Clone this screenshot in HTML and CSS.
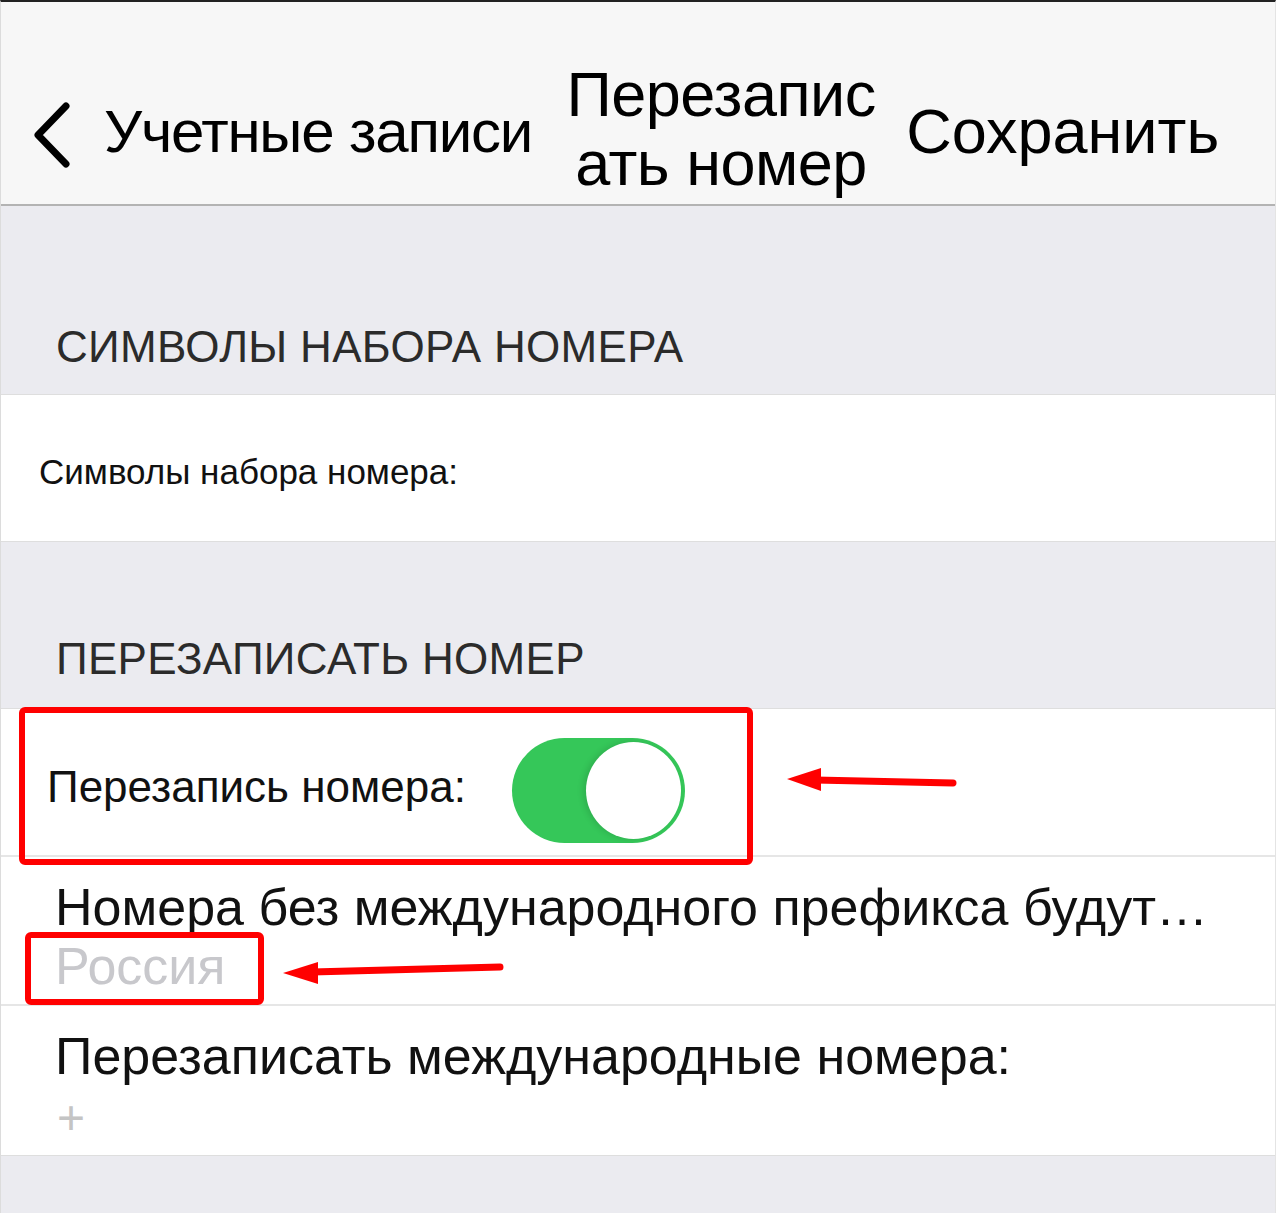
FILE: index.html
```html
<!DOCTYPE html>
<html lang="ru">
<head>
<meta charset="utf-8">
<title>Перезаписать номер</title>
<link rel="stylesheet" href="styles.css">
</head>
<body>
<div class="page">
  <header class="navbar">
    <div class="nav-back">
      <svg class="chevron" width="40" height="66" viewBox="0 0 40 66"><path d="M35 4 L7 33 L35 62" fill="none" stroke="#000" stroke-width="7" stroke-linecap="round" stroke-linejoin="round"/></svg>
      <span class="nav-back-text">Учетные записи</span>
    </div>
    <div class="nav-title">Перезапис<br>ать номер</div>
    <div class="nav-save">Сохранить</div>
  </header>

  <div class="section-header first">СИМВОЛЫ НАБОРА НОМЕРА</div>
  <div class="group">
    <div class="row row-small">Символы набора номера:</div>
  </div>

  <div class="section-header">ПЕРЕЗАПИСАТЬ НОМЕР</div>
  <div class="group">
    <div class="row row-toggle">
      <span class="toggle-label">Перезапись номера:</span>
      <span class="switch"><span class="knob"></span></span>
    </div>
    <div class="row row-two">
      <div class="row-title">Номера без международного префикса будут…</div>
      <div class="row-sub">Россия</div>
    </div>
    <div class="row row-two last">
      <div class="row-title">Перезаписать международные номера:</div>
      <div class="row-plus">+</div>
    </div>
  </div>
  <div class="bottom-fill"></div>

  <svg class="annotations" width="1276" height="1213" viewBox="0 0 1276 1213">
    <rect x="22" y="710" width="728" height="152" rx="3" fill="none" stroke="#ff0000" stroke-width="6"/>
    <rect x="28" y="935" width="233" height="67" rx="3" fill="none" stroke="#ff0000" stroke-width="6"/>
    <line x1="815" y1="780" x2="953" y2="783" stroke="#ff0000" stroke-width="7" stroke-linecap="round"/>
    <polygon points="787,779 821,768 821,791" fill="#ff0000"/>
    <line x1="312" y1="972" x2="500" y2="967" stroke="#ff0000" stroke-width="7" stroke-linecap="round"/>
    <polygon points="283,973 318,962 318,984" fill="#ff0000"/>
  </svg>
</div>
</body>
</html>
```
FILE: styles.css
```css
html, body {
  margin: 0;
  padding: 0;
}
body {
  width: 1276px;
  height: 1213px;
  overflow: hidden;
  background: #ebebf0;
  font-family: "Liberation Sans", Arial, sans-serif;
  color: #000;
}
.page {
  position: relative;
  width: 1276px;
  height: 1213px;
  border-top: 2px solid #222;
  box-sizing: border-box;
  border-left: 1px solid #dcdcdc;
  border-right: 1px solid #e4e4e4;
}
.navbar {
  height: 204px;
  background: #f7f7f7;
  border-bottom: 2px solid #b3b3b3;
  display: flex;
  align-items: center;
  padding-top: 58px;
  box-sizing: border-box;
}
.nav-back {
  display: flex;
  align-items: center;
  padding-left: 30px;
  margin-top: -2px;
}
.chevron {
  display: block;
  margin-top: 8px;
}
.nav-back-text {
  margin-left: 33px;
  font-size: 60px;
  letter-spacing: -1.2px;
}
.nav-title {
  margin-left: 30px;
  width: 318px;
  text-align: center;
  font-size: 63px;
  line-height: 69px;
  letter-spacing: -0.5px;
  margin-top: -6px;
}
.nav-save {
  margin-left: 26px;
  font-size: 63px;
  margin-top: -2px;
}
.section-header {
  height: 188px;
  box-sizing: border-box;
  padding: 0 0 22px 55px;
  display: flex;
  align-items: flex-end;
  font-size: 44px;
  color: #2b2b2b;
  letter-spacing: 0.3px;
}
.section-header + .group {
  border-top: 1px solid #dedede;
}
.section-header:not(.first) {
  height: 166px;
  padding-bottom: 24px;
}
.group {
  background: #fff;
  border-bottom: 1px solid #dedede;
}
.row {
  box-sizing: border-box;
}
.row-small {
  height: 146px;
  display: flex;
  align-items: center;
  padding: 8px 0 0 38px;
  font-size: 35px;
  color: #111;
}
.row-toggle {
  height: 148px;
  display: flex;
  align-items: center;
  padding: 10px 0 0 46px;
  border-bottom: 2px solid #e6e6e6;
}
.toggle-label {
  font-size: 44px;
  width: 465px;
  color: #111;
}
.switch {
  position: relative;
  display: block;
  width: 173px;
  height: 105px;
  border-radius: 53px;
  background: #35c759;
  margin-top: 6px;
}
.knob {
  position: absolute;
  right: 4px;
  top: 4px;
  width: 95px;
  height: 97px;
  border-radius: 50%;
  background: #fff;
  box-shadow: -3px 0 6px rgba(0, 0, 0, 0.12);
}
.row-two {
  height: 149px;
  padding: 20px 0 0 54px;
  border-bottom: 2px solid #e6e6e6;
}
.row-two.last {
  border-bottom: none;
}
.row-title {
  font-size: 52px;
  line-height: 60px;
  white-space: nowrap;
  color: #111;
}
.row-sub {
  font-size: 52px;
  line-height: 58px;
  color: #c8c8cc;
}
.row-plus {
  font-size: 48px;
  line-height: 64px;
  color: #c4c4c4;
  font-weight: 300;
  padding-left: 2px;
}
.bottom-fill {
  height: 60px;
}
.annotations {
  position: absolute;
  left: -1px;
  top: -2px;
  pointer-events: none;
}
```
